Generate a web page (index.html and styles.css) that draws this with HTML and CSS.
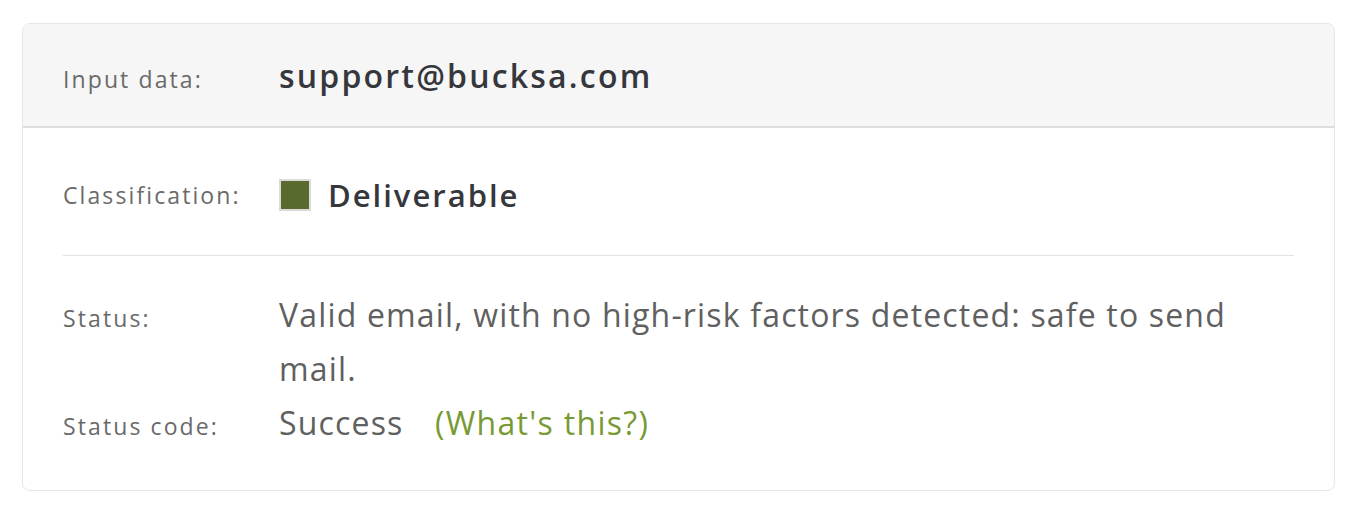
FILE: index.html
```html
<!DOCTYPE html>
<html lang="en">
<head>
<meta charset="utf-8">
<title>Email verification result</title>
<link rel="stylesheet" href="styles.css">
</head>
<body>
<div class="card">
  <div class="card-header">
    <div class="row">
      <div class="label">Input data:</div>
      <div class="email">support@bucksa.com</div>
    </div>
  </div>
  <div class="section section-class">
    <div class="row">
      <div class="label">Classification:</div>
      <div class="classification"><span class="swatch"></span><span class="class-name">Deliverable</span></div>
    </div>
  </div>
  <div class="divider"></div>
  <div class="section section-status">
    <div class="row">
      <div class="label">Status:</div>
      <div class="value">Valid email, with no high-risk factors detected: safe to send mail.</div>
    </div>
    <div class="row">
      <div class="label">Status code:</div>
      <div class="value">Success <a class="help" href="#">(What's this?)</a></div>
    </div>
  </div>
</div>
</body>
</html>
```

FILE: styles.css
```css
html, body {
  margin: 0;
  padding: 0;
  background: #ffffff;
}
body {
  font-family: "Open Sans", "Liberation Sans", sans-serif;
  padding: 23px 17px 21px 22px;
}
.card {
  border: 1px solid #e6e6e8;
  border-radius: 8px;
  overflow: hidden;
  background: #fff;
}
.card-header {
  background: #f6f6f6;
  border-bottom: 2px solid #dedede;
  height: 102px;
  display: flex;
  align-items: center;
  padding: 0 40px;
}
.row {
  display: flex;
  align-items: baseline;
}
.label {
  flex: 0 0 216px;
  font-size: 23px;
  letter-spacing: 2.1px;
  color: #6a6a6a;
}
.email {
  font-size: 32px;
  font-weight: 600;
  letter-spacing: 2.2px;
  color: #36373c;
}
.section-class {
  padding: 40px 40px 33px;
}
.section-class .row {
  height: 54px;
  align-items: center;
}
.classification {
  display: flex;
  align-items: center;
}
.swatch {
  width: 28px;
  height: 28px;
  background: #596a2d;
  border: 2px solid #dadada;
  margin-right: 17px;
}
.class-name {
  font-size: 31px;
  font-weight: 600;
  letter-spacing: 2px;
  color: #36373c;
}
.divider {
  height: 1px;
  background: #e3e3e3;
  margin: 0 40px;
}
.section-status {
  padding: 32px 40px 40px;
}
.value {
  font-size: 32px;
  letter-spacing: 1.17px;
  line-height: 54px;
  color: #606060;
  max-width: 990px;
}
.help {
  color: #789a35;
  text-decoration: none;
  margin-left: 22px;
  letter-spacing: 1.3px;
}
```
